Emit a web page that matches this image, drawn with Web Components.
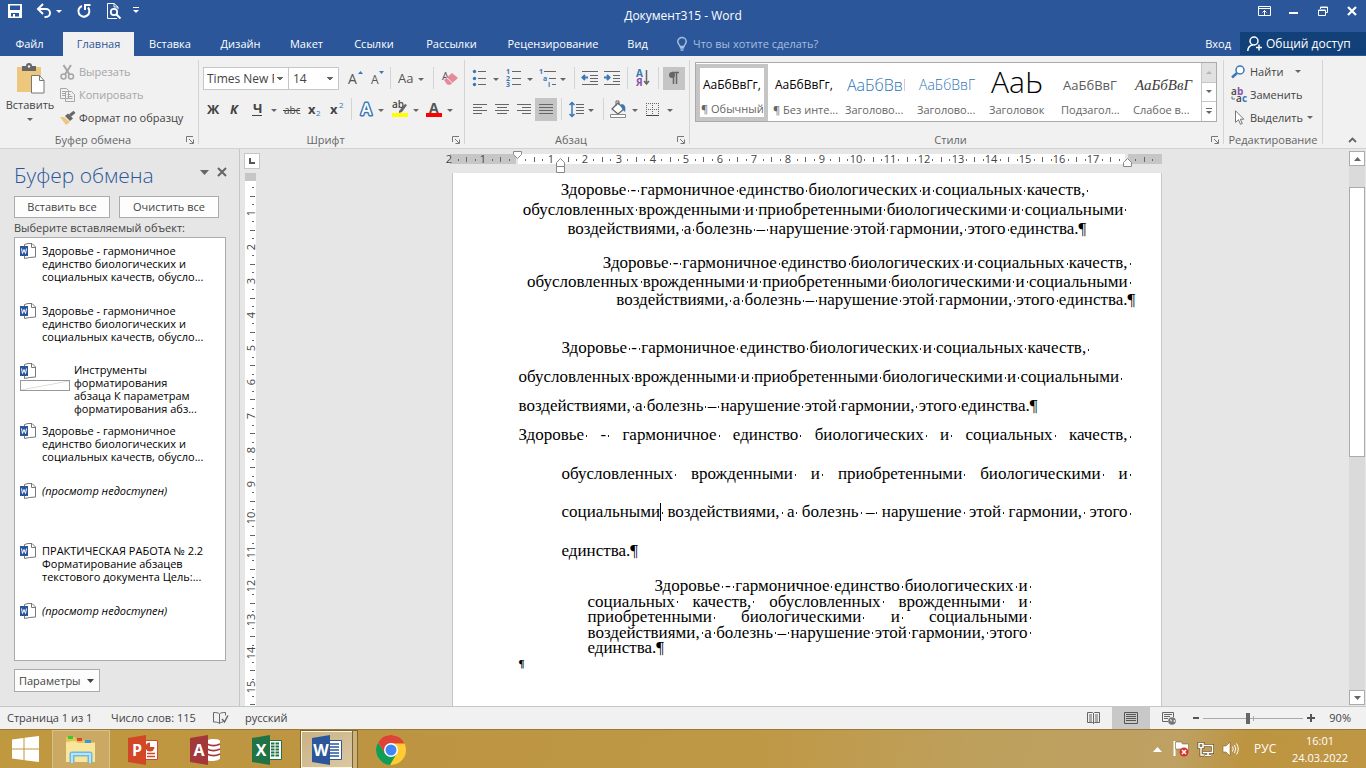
<!DOCTYPE html>
<html lang="ru">
<head>
<meta charset="utf-8">
<title>Документ315 - Word</title>
<style>
html,body{margin:0;height:100%}
body{font-family:"Open Sans","Noto Sans",sans-serif;font-size:11px;line-height:16px;color:#444;overflow:hidden}
</style>
</head>
<body>
<word-app></word-app>
<script>
const BASE = `*{box-sizing:border-box} button{font:inherit;color:inherit;background:none;border:0;padding:0;margin:0;white-space:nowrap}
svg{display:block;flex:none;overflow:visible} a{color:inherit;text-decoration:none}`;
function define(name, css, html) {
  const t = document.createElement('template');
  customElements.define(name, class extends HTMLElement {
    connectedCallback() {
      if (this.shadowRoot) return;
      t.innerHTML = `<style>${BASE}${css}</style>` + (typeof html === 'function' ? html(this) : html);
      this.attachShadow({mode: 'open'}).append(t.content.cloneNode(true));
    }
  });
}
const arrow = (x, y, c = '#666') => `<path fill="${c}" d="M${x - 3} ${y - 1}h6l-3 3z"/>`;
const svg = (w, h, inner) => `<svg width="${w}" height="${h}" viewBox="0 0 ${w} ${h}" aria-hidden="true">${inner}</svg>`;

/* ---------- ribbon building blocks ---------- */
define('rb-btn', `
:host{display:block;flex:none;width:var(--bw,22px);height:23px}
button{width:100%;height:100%;display:flex;align-items:center;justify-content:flex-start}
:host([on]) button{background:#c5c5c5}`, el => `<button type="button" aria-label="${el.getAttribute('label') || ''}"><slot></slot></button>`);
define('rb-sep', `:host{display:block;flex:none;width:1px;height:22px;background:#d4d4d4;margin:0 4px}`, '');
define('rb-group', `
:host{display:flex;flex-direction:column;flex:none;width:var(--w);padding-top:4px}
.in{flex:1;display:flex;flex-direction:column;border-right:1px solid #d4d4d4;margin-bottom:4px}
.body{flex:1;min-height:0}
.foot{display:flex;align-items:center;height:16px;color:#666;margin-bottom:-4px}
.foot span{flex:1;text-align:center;white-space:nowrap}
.foot button{width:12px;height:16px;display:flex;align-items:center}`,
el => `<div class="in"><div class="body"><slot></slot></div><div class="foot"><span>${el.getAttribute('name')}</span>${el.hasAttribute('launcher') ? `<button type="button" aria-label="Параметры группы">${svg(8, 8, '<path d="M.5 6V.5H7M3 3l4 4M7.500 3.500V7.500H3.500" fill="none" stroke="#777"/>')}</button>` : ''}</div></div>`);

define('style-card', `
:host{display:block;flex:none;width:72px;height:57px;padding:0 2px 0 5px}
button{width:100%;height:100%;display:flex;flex-direction:column;text-align:left;overflow:hidden}
:host([on]){padding:0}
:host([on]) button{border:4px solid #c5c5c5;padding:0 1px}
b{display:flex;align-items:center;font-weight:400;height:34px;width:60px;overflow:hidden;color:#000;font-size:12px;margin-top:4px;padding-left:2px;white-space:nowrap}
:host([on]) b{margin-top:0}
span{color:#666;display:block;width:100%;line-height:16px}
.h1{color:#2e74b5;font-size:16px;font-weight:300}.h2{color:#2e74b5;font-size:14px;font-weight:300}
.t{font-size:30px;font-weight:300;line-height:28px;align-items:flex-start}.s{color:#5a5a5a;font-size:13px}
.e{font:italic 15px "Liberation Serif",serif;color:#404040}`,
el => `<button type="button"><b class="${el.getAttribute('look') || ''}">${el.getAttribute('sample')}</b><span>${el.getAttribute('name')}</span></button>`);

/* ---------- title bar ---------- */
define('title-bar', `
:host{display:grid;grid-template-columns:1fr auto 1fr;align-items:center;height:32px;color:#fff}
.q,.c{display:flex;height:22px;align-self:start}.c{justify-content:flex-end}
.q button,.c button{height:22px;display:flex;align-items:center;justify-content:center}
.c button{width:29px}
.q button:nth-child(1){width:30px}.q button:nth-child(2){width:38px}.q button:nth-child(3){width:32px}.q button:nth-child(4){width:27px}.q button:nth-child(5){width:18px}
h1{font-size:12px;font-weight:400;margin:0;white-space:nowrap}`,
`<div class="q">
<button type="button" aria-label="Сохранить">${svg(14, 14, '<path fill="#fff" fill-rule="evenodd" d="M0 0h14v14H0zM2 1.500v4.500h10V1.500zM3 9v3.500h2V10h2v2.500h4V9z"/>')}</button>
<button type="button" aria-label="Отменить">${svg(24, 14, '<path d="M2 5h7a4 4 0 0 1 0 8H7.500" fill="none" stroke="#fff" stroke-width="2"/><path d="M6 0L1 5l5 5" fill="none" stroke="#fff" stroke-width="2"/>' + arrow(22, 7, '#fff'))}</button>
<button type="button" aria-label="Повторить">${svg(14, 14, '<path d="M5 2A5.500 5.500 0 1 0 11 3.500" fill="none" stroke="#fff" stroke-width="2"/><path d="M8 6V1h5.500" fill="none" stroke="#fff" stroke-width="2"/>')}</button>
<button type="button" aria-label="Просмотр">${svg(14, 16, '<path d="M10 15.500H.5V.5H7l4 3.500v2M7 .5V4h4" fill="none" stroke="#fff"/><circle cx="7" cy="9" r="3.200" fill="none" stroke="#fff" stroke-width="1.800"/><path d="M9.500 11.500l4 4" stroke="#fff" stroke-width="2"/>')}</button>
<button type="button" aria-label="Настройка панели">${svg(6, 8, '<path d="M0 .5h6" stroke="#fff"/>' + arrow(3, 4, '#fff'))}</button>
</div><h1>Документ315 - Word</h1>
<div class="c">
<button type="button" aria-label="Параметры ленты">${svg(13, 10, '<path d="M.5.5h12v9H.5zM1 2.500h11M6.500 9V4.500M4.500 6.500l2-2 2 2" fill="none" stroke="#fff"/>')}</button>
<button type="button" aria-label="Свернуть">${svg(9, 10, '<path d="M0 7h9" stroke="#fff" stroke-width="2"/>')}</button>
<button type="button" aria-label="Восстановить">${svg(10, 10, '<path d="M2.500 3V1h7v5.500H7.500M.5 4h7v5.500h-7zM.5 4.500h7M2.500 1.500h7" fill="none" stroke="#fff"/>')}</button>
<button type="button" aria-label="Закрыть">${svg(10, 10, '<path d="M1 1l8 8M9 1L1 9" stroke="#fff" stroke-width="2.200"/>')}</button></div>`);

define('tab-strip', `
:host{display:flex;height:24px;color:#fff}
nav{display:flex}
nav a{width:var(--w);display:flex;align-items:center;justify-content:center;white-space:nowrap}
nav a.on{background:#f1f1f1;color:#2b579a}
nav a:first-child{padding-right:4px}
.ask{display:flex;align-items:center;gap:6px;color:#a6bddd;white-space:nowrap;margin-left:15px}
.sp{flex:1}.login{align-self:center;margin-right:9px}
.share{background:#124078;width:126px;height:23px;display:flex;align-items:center;gap:4px;padding-left:7px;font-size:12px}`,
`<nav><a href="#" style="--w:63px">Файл</a><a href="#" class="on" style="--w:71px">Главная</a><a href="#" style="--w:72px">Вставка</a><a href="#" style="--w:69px">Дизайн</a><a href="#" style="--w:63px">Макет</a><a href="#" style="--w:72px">Ссылки</a><a href="#" style="--w:83px">Рассылки</a><a href="#" style="--w:120px">Рецензирование</a><a href="#" style="--w:49px">Вид</a></nav>
<button type="button" class="ask">${svg(10, 14, '<path d="M3 9.500C3 8 .8 7 .8 4.800a4.200 4.200 0 0 1 8.400 0C9.200 7 7 8 7 9.500zM3 11h4M3.500 13h3" fill="none" stroke="#a6bddd" stroke-width="1.500"/>')}Что вы хотите сделать?</button>
<div class="sp"></div><a href="#" class="login">Вход</a>
<button type="button" class="share">${svg(15, 15, '<circle cx="7" cy="5" r="4" fill="none" stroke="#fff" stroke-width="1.500"/><path d="M.8 15c0-3 2-5.500 5-6M12 8.500v6M9 11.500h6" fill="none" stroke="#fff" stroke-width="1.500"/>')}Общий доступ</button>`);

/* ---------- ribbon ---------- */
const lines = (arr, c = '#666') => arr.map(([a, b, y]) => `<path d="M${a} ${y}.5H${b}" stroke="${c}"/>`).join('');
const txt = (x, y, s, size, fill, extra = '') => `<text x="${x}" y="${y}" font-size="${size}" fill="${fill}" ${extra}>${s}</text>`;
define('word-ribbon', `
:host{display:flex;height:93px;background:#f1f1f1;border-bottom:1px solid #d2d2d2}
.row{display:flex;height:23px}
.clip{display:flex}
.paste{width:60px;height:70px;display:flex;flex-direction:column;align-items:center;padding-top:4px;gap:3px}
.paste svg:last-child{margin-top:2px}
.side{display:flex;flex-direction:column}
.side button{display:flex;align-items:center;gap:4px;height:23px}
.side .dis{color:#a6a6a6}
.font{padding:7px 0 0 4px}.para{padding:7px 0 0 3px}
.two{margin-top:8px}
select{appearance:none;font:inherit;font-size:12px;color:#444;height:23px;border:1px solid #c6c6c6;border-radius:0;padding:0 14px 0 3px;margin:0;
background:linear-gradient(to bottom left,#666 50%,transparent 51%) no-repeat right 8px center/3px 3px,linear-gradient(to bottom right,#666 50%,transparent 51%) no-repeat right 5px center/3px 3px,#fff}
.f1{width:86px}.f2{width:55px;margin-left:-1px;padding-left:4px;margin-right:3px}
.gal{display:flex;height:60px;margin:2px 0 0 5px;width:522px;border:1px solid #ababab;background:#fff;padding-top:1px}
.cards{display:flex;flex:1;overflow:hidden}
.nav{width:15px;display:flex;flex-direction:column;border-left:1px solid #c6c6c6;margin-top:-1px}
.nav button{flex:1;display:flex;align-items:center;justify-content:center;border-top:1px solid #c6c6c6}
.nav button:first-child{background:#e1e1e1;border-top:0}
.edit{display:flex;flex-direction:column;padding-left:7px}.edit button{display:flex;align-items:center;gap:4px;height:23px}
.edit .find svg:last-child{margin-left:8px}
.end{flex:1;display:flex;align-items:flex-end;justify-content:flex-end;padding:0 9px 5px 0}`,
`<rb-group name="Буфер обмена" launcher style="--w:199px"><div class="clip">
<button type="button" class="paste">${svg(30, 30, '<path fill="#edc77e" d="M2 3h24v25H2z"/><path fill="#666" d="M7 2h4a3 3 0 0 1 6 0h4v5H7z"/><circle cx="14" cy="2.500" r="1.200" fill="#f1f1f1"/><path fill="#fff" stroke="#777" d="M16.500 11.500h8l4.500 5v12.500h-12.500z"/><path fill="none" stroke="#777" d="M24.500 11.500v5h4.500"/>')}Вставить${svg(6, 4, arrow(3, 1))}</button>
<div class="side">
<button type="button" class="dis">${svg(15, 16, '<g fill="none" stroke="#a6a6a6" stroke-width="1.500"><circle cx="3.500" cy="12.500" r="2.500"/><circle cx="11" cy="12.500" r="2.500"/><path d="M5 10.500L11 1M9.500 10.500L3.500 1" stroke-width="2"/></g>')}Вырезать</button>
<button type="button" class="dis">${svg(15, 14, '<g fill="#f1f1f1" stroke="#a6a6a6"><path d="M.5.5h6l2 2v8h-8zM5.500 3.500h6l3 3v7h-9z"/><path d="M2 3.500h3M2 5.500h3M2 7.500h3M7.500 6.500h3M7.500 8.500h5M7.500 10.500h5"/></g>')}Копировать</button>
<button type="button">${svg(15, 14, '<path fill="#edc77e" d="M0 6l4 0 6 5-4 3z"/><path fill="#666" d="M5 5l3-2.500 5 5L10 10z"/><path d="M10 4.500L14.500.8" stroke="#666" stroke-width="3"/>')}Формат по образцу</button></div></div></rb-group>
<rb-group name="Шрифт" launcher style="--w:266px"><div class="font"><div class="row">
<select class="f1" aria-label="Шрифт"><option>Times New Roman</option></select><select class="f2" aria-label="Размер шрифта"><option>14</option></select>
<rb-btn label="Увеличить">${svg(22, 23, txt(6, 17, 'A', 14, '#555') + '<path fill="#3a78b5" d="M16 7h5l-2.500-3z"/>')}</rb-btn>
<rb-btn label="Уменьшить">${svg(22, 23, txt(7, 17, 'A', 12, '#555') + '<path fill="#3a78b5" d="M15 4h5l-2.500 3z"/>')}</rb-btn>
<rb-sep></rb-sep><rb-btn label="Регистр" style="--bw:34px">${svg(34, 23, txt(3, 16, 'Aa', 13, '#555') + arrow(26, 12))}</rb-btn>
<rb-sep></rb-sep><rb-btn label="Очистить" style="--bw:26px">${svg(26, 23, txt(4, 13, 'A', 11, '#555') + '<path fill="#e8899b" d="M6 13l8-7 6 5-8 7-3-.5z"/><path stroke="#f1f1f1" d="M8.500 10.500l6 5.500"/>')}</rb-btn></div>
<div class="row two">
<rb-btn label="Полужирный">${svg(22, 23, txt(4, 16, 'Ж', 13, '#444', 'font-weight="700"'))}</rb-btn>
<rb-btn label="Курсив">${svg(22, 23, txt(5, 16, 'К', 13, '#444', 'font-weight="700" font-style="italic"'))}</rb-btn>
<rb-btn label="Подчеркнутый" style="--bw:34px">${svg(34, 23, txt(6, 15, 'Ч', 13, '#444', 'font-weight="700"') + '<path d="M5 17.500h10" stroke="#444"/>' + arrow(27, 12))}</rb-btn>
<rb-btn label="Зачеркнутый">${svg(22, 23, txt(3, 16, 'abc', 10, '#444') + '<path d="M2 12.500h17" stroke="#444"/>')}</rb-btn>
<rb-btn label="Подстрочный">${svg(22, 23, txt(5, 16, 'x', 13, '#444', 'font-weight="700"') + txt(13, 18, '2', 8, '#3a78b5'))}</rb-btn>
<rb-btn label="Надстрочный">${svg(22, 23, txt(5, 16, 'x', 13, '#444', 'font-weight="700"') + txt(14, 10, '2', 8, '#3a78b5'))}</rb-btn>
<rb-sep></rb-sep>
<rb-btn label="Эффекты" style="--bw:32px">${svg(32, 23, txt(5, 17, 'A', 16, '#fff', 'stroke="#3a78b5" stroke-width="3" font-weight="600" paint-order="stroke" stroke-linejoin="round"') + arrow(25, 12))}</rb-btn>
<rb-btn label="Выделение" style="--bw:34px">${svg(34, 23, txt(4, 10, 'ab', 10, '#444', 'font-weight="600"') + '<path d="M11 13l6-7 2 1-5 7-3 1z" fill="#666"/><path fill="#ff0" d="M4 15h16v4H4z"/>' + arrow(28, 12))}</rb-btn>
<rb-btn label="Цвет текста" style="--bw:34px">${svg(34, 23, txt(7, 15, 'A', 14, '#555', 'font-weight="700"') + '<path fill="#f00" d="M4 15h16v4H4z"/>' + arrow(28, 12))}</rb-btn>
</div></div></rb-group>
<rb-group name="Абзац" launcher style="--w:225px"><div class="para"><div class="row">
<rb-btn label="Маркеры" style="--bw:34px">${svg(34, 23, '<g fill="#3a78b5"><circle cx="6.500" cy="4.500" r="1.700"/><circle cx="6.500" cy="11.500" r="1.700"/><circle cx="6.500" cy="17.500" r="1.700"/></g>' + lines([[10, 18, 4], [10, 18, 11], [10, 18, 17]]) + arrow(28, 12))}</rb-btn>
<rb-btn label="Нумерация" style="--bw:34px">${svg(34, 23, [[7, 1], [14, 2], [20, 3]].map(([y, n]) => txt(4, y, n, 7, '#3a78b5', 'font-weight="700"')).join('') + lines([[10, 19, 4], [10, 19, 11], [10, 19, 17]]) + arrow(28, 12))}</rb-btn>
<rb-btn label="Многоуровневый" style="--bw:34px">${svg(34, 23, txt(3, 7, '1', 7, '#3a78b5', 'font-weight="700"') + txt(7, 14, 'a', 7, '#3a78b5', 'font-weight="700"') + txt(12, 20, 'i', 7, '#3a78b5', 'font-weight="700"') + lines([[8, 20, 4], [13, 20, 11], [16, 20, 17]]) + arrow(27, 12))}</rb-btn>
<rb-sep></rb-sep>
<rb-btn label="Уменьшить отступ">${svg(22, 23, lines([[3, 19, 4], [11, 19, 8], [11, 19, 11], [11, 19, 14], [3, 19, 17]]) + '<path d="M9 10.500H4M6 8l-2.500 2.500L6 13" fill="none" stroke="#3a78b5" stroke-width="2"/>')}</rb-btn>
<rb-btn label="Увеличить отступ">${svg(22, 23, lines([[3, 19, 4], [12, 19, 8], [12, 19, 11], [12, 19, 14], [3, 19, 17]]) + '<path d="M3 10.500h5M6 8l2.500 2.500L6 13" fill="none" stroke="#3a78b5" stroke-width="2"/>')}</rb-btn>
<rb-sep></rb-sep>
<rb-btn label="Сортировка">${svg(22, 23, txt(4, 10, 'А', 10, '#3a78b5', 'font-weight="700"') + txt(4, 19, 'Я', 10, '#8a52a8', 'font-weight="700"') + '<path d="M14.500 3v13M12 14l2.500 3 2.500-3" fill="none" stroke="#666" stroke-width="1.500"/>')}</rb-btn>
<rb-sep></rb-sep>
<rb-btn on label="Непечатаемые знаки">${svg(22, 23, '<path d="M9 5.500h7M10.500 5v12M13.500 5v12" stroke="#666" stroke-width="1.500"/><circle cx="9" cy="8" r="3" fill="#666"/>')}</rb-btn></div>
<div class="row two">
<rb-btn label="По левому краю">${svg(22, 23, lines([[5, 19, 6], [5, 14, 9], [5, 19, 12], [5, 14, 15]]))}</rb-btn>
<rb-btn label="По центру">${svg(22, 23, lines([[5, 19, 6], [7, 17, 9], [5, 19, 12], [7, 17, 15]]))}</rb-btn>
<rb-btn label="По правому краю" style="--bw:23px">${svg(22, 23, lines([[5, 19, 6], [10, 19, 9], [5, 19, 12], [10, 19, 15]]))}</rb-btn>
<rb-btn on label="По ширине">${svg(22, 23, lines([[4, 18, 6], [4, 18, 9], [4, 18, 12], [4, 18, 15]]))}</rb-btn>
<rb-sep></rb-sep>
<rb-btn label="Интервал" style="--bw:33px">${svg(33, 23, lines([[10, 18, 6], [10, 18, 9], [10, 18, 12], [10, 18, 15]]) + '<path d="M6 4v15M3.500 7L6 4.500 8.500 7M3.500 16L6 18.500 8.500 16" fill="none" stroke="#3a78b5" stroke-width="1.500"/>' + arrow(25, 12))}</rb-btn>
<rb-sep></rb-sep>
<rb-btn label="Заливка" style="--bw:33px">${svg(33, 23, '<path d="M4 11l6-6 6 6-6 5z" fill="#fff" stroke="#666" stroke-width="1.300"/><path d="M8 8V3h3v4" fill="none" stroke="#666"/><path d="M13 6c4 0 5 3 4 8l-3-3z" fill="#3a78b5"/><path d="M2.500 16.500h15v3h-15z" fill="#fff" stroke="#888"/>' + arrow(27, 12))}</rb-btn>
<rb-btn label="Границы" style="--bw:32px">${svg(32, 23, '<path d="M5 5.500h13M5 11.500h13M5.500 5v12M11.500 5v12M17.500 5v12" stroke="#666" stroke-dasharray="1 1"/><path d="M5 17.500h13" stroke="#444"/>' + arrow(29, 12))}</rb-btn>
</div></div></rb-group>
<rb-group name="Стили" launcher style="--w:534px"><div class="gal"><div class="cards">
<style-card on sample="АаБбВвГг," name="¶ Обычный"></style-card>
<style-card sample="АаБбВвГг," name="¶ Без инте..."></style-card>
<style-card look="h1" sample="АаБбВвГ" name="Заголово..."></style-card>
<style-card look="h2" sample="АаБбВвГ" name="Заголово..."></style-card>
<style-card look="t" sample="АаЬ" name="Заголовок"></style-card>
<style-card look="s" sample="АаБбВвГ" name="Подзагол..."></style-card>
<style-card look="e" sample="АаБбВвГ" name="Слабое в..."></style-card></div>
<div class="nav"><button type="button" aria-label="Вверх">${svg(6, 4, '<path fill="#b5b5b5" d="M0 4h6L3 1z"/>')}</button><button type="button" aria-label="Вниз">${svg(6, 4, arrow(3, 1))}</button><button type="button" aria-label="Еще">${svg(6, 7, '<path d="M0 .5h6" stroke="#666"/>' + arrow(3, 4))}</button></div></div></rb-group>
<rb-group name="Редактирование" style="--w:99px"><div class="edit">
<button type="button" class="find">${svg(15, 14, '<circle cx="9" cy="5" r="4" fill="#fff" stroke="#3a78b5" stroke-width="1.500"/><path d="M6 8l-5 4.500" stroke="#3a78b5" stroke-width="2.500"/>')}Найти${svg(6, 4, arrow(3, 1))}</button>
<button type="button">${svg(15, 16, txt(0, 8, 'a', 10, '#444', 'font-weight="600"') + txt(6, 8, 'b', 10, '#8a52a8', 'font-weight="700"') + txt(5, 15, 'a', 10, '#444', 'font-weight="600"') + txt(11, 15, 'c', 10, '#3a78b5', 'font-weight="700"') + '<path d="M1 9.500v2.500h3" fill="none" stroke="#3a78b5"/>')}Заменить</button>
<button type="button">${svg(15, 15, '<path d="M4.500.8v11.500l3-2.500 2 4.500 1.800-.8-2-4.300h3.500z" fill="#fff" stroke="#777"/>')}Выделить${svg(6, 4, arrow(3, 1))}</button></div></rb-group>
<div class="end"><button type="button" aria-label="Свернуть ленту">${svg(9, 6, '<path d="M1 5l3.500-3.500L8 5" fill="none" stroke="#666" stroke-width="1.800"/>')}</button></div>`);

/* ---------- clipboard pane ---------- */
const docIcon = svg(16, 16, '<path d="M4.500 3V1.500L8 .5h4l3.500 3.500V14l-6 .5-5 1V13" fill="#fff" stroke="#777"/><path d="M11.500.5v4h4" fill="none" stroke="#777"/><path fill="#2b579a" d="M0 3h8v10H0z"/><path d="M1.500 5.500l1 5L4 6.500l1.500 4 1-5" fill="none" stroke="#fff"/>');
define('clip-item', `
:host{display:flex;height:60px;gap:6px;color:#000;line-height:13px;padding-left:5px}
p{margin:0;padding-top:1px;white-space:pre-line}
:host([dim]) p{font-style:italic}
.pic{width:50px}
.th{width:50px;height:11px;border:1px solid #999;background:linear-gradient(to bottom right,#fff 45%,#d5dfd0 50%,#fff 55%);margin-top:1px}
:host([thumb]){gap:4px}:host([thumb]) p{padding:0}`,
el => `<div class="${el.hasAttribute('thumb') ? 'pic' : ''}">${docIcon}${el.hasAttribute('thumb') ? '<div class="th"></div>' : ''}</div><p><slot></slot></p>`);
define('clip-pane', `
:host{display:flex;flex-direction:column;width:240px;flex:none;background:#e6e6e6;border-right:1px solid #c6c6c6;padding:13px 12px 0 14px}
header{display:flex;align-items:center;gap:8px;height:26px}
h2{flex:1;margin:0;font-size:21px;line-height:26px;color:#2b579a;font-weight:300}
header button{margin-bottom:6px}
.b{display:flex;gap:9px;margin-top:8px}
.b button,.opt{height:22px;background:#fdfdfd;border:1px solid #ababab}
.b button:first-child{width:96px}.b button:last-child{width:100px}
#l{margin:2px 0 1px}
.list{flex:1;background:#fff;border:1px solid #ababab;padding-top:5px;overflow:hidden;margin-right:1px}
.opt{width:86px;margin:8px 0 14px;height:23px;display:flex;align-items:center;gap:6px;padding-left:4px}
`,
`<header><h2>Буфер обмена</h2><button type="button" aria-label="Меню">${svg(9, 5, '<path fill="#666" d="M0 0h9L4.500 5z"/>')}</button><button type="button" aria-label="Закрыть">${svg(10, 10, '<path d="M1 1l8 8M9 1L1 9" stroke="#666" stroke-width="2"/>')}</button></header>
<div class="b"><button type="button">Вставить все</button><button type="button">Очистить все</button></div>
<div id="l">Выберите вставляемый объект:</div>
<div class="list" role="list" aria-labelledby="l">
<clip-item>Здоровье - гармоничное
единство биологических и
социальных качеств, обусло...</clip-item>
<clip-item>Здоровье - гармоничное
единство биологических и
социальных качеств, обусло...</clip-item>
<clip-item thumb>Инструменты
форматирования
абзаца К параметрам
форматирования абз...</clip-item>
<clip-item>Здоровье - гармоничное
единство биологических и
социальных качеств, обусло...</clip-item>
<clip-item dim>(просмотр недоступен)</clip-item>
<clip-item>ПРАКТИЧЕСКАЯ РАБОТА № 2.2
Форматирование абзацев
текстового документа Цель:...</clip-item>
<clip-item dim>(просмотр недоступен)</clip-item></div>
<button type="button" class="opt">Параметры${svg(7, 4, '<path fill="#444" d="M0 0h7L3.500 4z"/>')}</button>`);

/* ---------- rulers ---------- */
const CM = 610 / 18;
define('h-ruler', `:host{display:block;width:710px;height:24px}text{font-size:11px;fill:#444;text-anchor:middle}`, () => {
  let s = '<path fill="#c6c6c6" d="M-2 5h66v10H-2z"/><path fill="#fff" d="M66 5h607v10H66z"/><path fill="#c6c6c6" d="M676 5h34v10h-34z"/>';
  for (let i = -2; i < 19; i++) {
    const x = f => 65 + Math.round((i + f) * CM);
    if (i && i < 18) s += `<text x="${x(0)}" y="14">${Math.abs(i)}</text>`;
    s += `<path d="M${x(.5)}.5 8v5" stroke="#666"/><path d="M${x(.25)} 10h1v2h-1zM${x(.75)} 10h1v2h-1z" fill="#666"/>`;
  }
  s += '<g fill="#fff" stroke="#888"><path d="M61.500 2.500h8v3l-4 4-4-4zM104.500 23.500v-6h8v6zM104.500 17.500v-4l4-4 4 4v4zM671.500 17.500v-4l4-4 4 4v4z"/></g>';
  return svg(710, 24, s);
});
define('v-ruler', `:host{display:block;overflow:hidden;min-height:0}text{font-size:11px;fill:#444;text-anchor:middle}svg{width:24px;height:100%}`, () => {
  let s = '<rect x="5" y="0" width="11" height="2000" fill="#fff"/><path fill="#c6c6c6" d="M5 0h11v8H5z"/>';
  for (let i = 0; i < 24; i++) {
    const y = f => 6 + Math.round((i + f) * CM);
    if (i) s += `<text transform="translate(15 ${y(0)}) rotate(-90)">${i}</text>`;
    s += `<path d="M10 ${y(.5)}.5h5" stroke="#666"/><path d="M12 ${y(.25)}h2v1h-2zM12 ${y(.75)}h2v1h-2z" fill="#666"/>`;
  }
  return `<svg aria-hidden="true">${s}</svg>`;
});

/* ---------- document ---------- */
define('doc-para', `
:host{display:flex;flex-direction:column;justify-content:space-between;height:var(--h);line-height:var(--lh);margin-top:var(--mt,0);font-family:"Liberation Serif",serif;font-size:17px;color:#000}
div{white-space:nowrap}
.s{white-space:pre;background:linear-gradient(#222,#222) no-repeat 2px 58%/1px 2px}
.h{display:inline-block;width:0;white-space:pre}
.h .s{display:inline-block;width:5px}
.caret{display:inline-block;width:1px;height:18px;margin-right:-1px;background:#000;vertical-align:-4px}
:host([kind=center]) div{text-align:center}
:host([kind=right]) div{text-align:right}
:host([kind=first]) div:first-of-type{padding-left:43px}
:host([kind=hang]) div,:host([kind=block]) div{text-align:justify;text-align-last:justify}
:host([kind=hang]) div:not(:first-of-type){padding-left:43px}
:host([kind=block]){padding:0 100px 0 69px}
:host([kind=block]) div:first-of-type{padding-left:67px}
:host([kind=hang]) div:last-child,:host([kind=block]) div:last-child{text-align-last:left}
:host([kind=mark]){font-size:11px;font-weight:700}`,
el => {
  const ls = el.getAttribute('lines').split('|');
  return ls.map((l, i) => '<div>' + l.split(' ').join('<span class="s"> </span>').replace('^', '<span class="caret"></span>') +
    `<span class="h">${i < ls.length - 1 ? '<span class="s"> </span>' : '¶'}</span></div>`).join('');
});
define('doc-page', `
:host{display:block;width:710px;flex:none;background:#fff;border-left:1px solid #c6c6c6;border-right:1px solid #c6c6c6;padding:7px 33px 0 66px}`, `
<doc-para kind="center" style="--lh:19px;--h:58px" lines="Здоровье - гармоничное единство биологических и социальных качеств,|обусловленных врожденными и приобретенными биологическими и социальными|воздействиями, а болезнь – нарушение этой гармонии, этого единства."></doc-para>
<doc-para kind="right" style="--lh:18px;--h:55px;--mt:16px" lines="Здоровье - гармоничное единство биологических и социальных качеств,|обусловленных врожденными и приобретенными биологическими и социальными|воздействиями, а болезнь – нарушение этой гармонии, этого единства."></doc-para>
<doc-para kind="first" style="--lh:29px;--h:87px;--mt:24px" lines="Здоровье - гармоничное единство биологических и социальных качеств,|обусловленных врожденными и приобретенными биологическими и социальными|воздействиями, а болезнь – нарушение этой гармонии, этого единства."></doc-para>
<doc-para kind="hang" style="--lh:29px;--h:145px" lines="Здоровье - гармоничное единство биологических и социальных качеств,|обусловленных врожденными и приобретенными биологическими и|социальными^ воздействиями, а болезнь – нарушение этой гармонии, этого|единства."></doc-para>
<doc-para kind="block" style="--lh:15px;--h:77px;--mt:13px" lines="Здоровье - гармоничное единство биологических и|социальных качеств, обусловленных врожденными и|приобретенными биологическими и социальными|воздействиями, а болезнь – нарушение этой гармонии, этого|единства."></doc-para>
<doc-para kind="mark" style="--lh:16px;--h:16px" lines=""></doc-para>`);
define('scroll-bar', `
:host{display:flex;flex-direction:column;width:16px;background:#dadada;margin:2px 1px 1px 0}
button{height:15px;background:#fff;border:1px solid #ababab;display:flex;align-items:center;justify-content:center;flex:none}
.gap{flex:21}.thumb{flex:269;background:#fff;border:1px solid #ababab}.rest{flex:234}`,
`<button type="button" aria-label="Вверх">${svg(7, 4, '<path fill="#666" d="M0 4h7L3.500 0z"/>')}</button><div class="gap"></div><div class="thumb"></div><div class="rest"></div><button type="button" aria-label="Вниз">${svg(7, 4, '<path fill="#666" d="M0 0h7L3.500 4z"/>')}</button>`);
define('doc-area', `
:host{flex:1;min-width:0;display:flex;background:#e6e6e6;overflow:hidden}
.g{flex:1;display:grid;grid-template:24px minmax(0,1fr)/24px minmax(0,1fr)}
.tab{width:16px;height:16px;background:#fff;border:1px solid #c6c6c6;margin:4px 0 0 4px;display:flex;align-items:center;justify-content:center}
.c{display:flex;justify-content:center;min-height:0}`,
`<div class="g"><button type="button" class="tab" aria-label="Табуляция">${svg(6, 6, '<path d="M1 0v5h5" fill="none" stroke="#555" stroke-width="2"/>')}</button><div class="c"><h-ruler></h-ruler></div><v-ruler></v-ruler><div class="c"><doc-page></doc-page></div></div><scroll-bar></scroll-bar>`);

/* ---------- status bar ---------- */
define('status-bar', `
:host{display:flex;height:23px;align-items:center;background:#f1f1f1;border-top:1px solid #c6c6c6;padding:0 15px 0 7px;flex:none;white-space:nowrap}
.p{width:104px}.w{width:102px}.l{margin-left:17px}.sp{flex:1}
.v{width:38px;height:22px;display:flex;align-items:center;justify-content:center}.v.on{background:#c8c8c8}
.z{display:flex;align-items:center;margin-left:5px;gap:4px}
input{appearance:none;width:100px;height:12px;margin:0;background:linear-gradient(#aaa,#aaa) no-repeat 0 50%/100% 1px,linear-gradient(#aaa,#aaa) no-repeat 50% 50%/1px 5px}
input::-webkit-slider-thumb{appearance:none;width:4px;height:11px;background:#666}
.pc{width:36px;text-align:right}`,
`<span class="p">Страница 1 из 1</span><span class="w">Число слов: 115</span><button type="button" aria-label="Правописание">${svg(15, 13, '<path d="M6.500 11.500V2C5 .5 3 .5 .5 .5v9.500c2 0 4.500 0 6 1.500 1-1 2-1.500 3.500-1.500M6.500 2C8 .5 10 .5 12.500 .5v3" fill="none" stroke="#666"/><path d="M9 7l2.500 3L15 3.500" fill="none" stroke="#666" stroke-width="1.500"/>')}</button><span class="l">русский</span>
<div class="sp"></div>
<button type="button" class="v" aria-label="Режим чтения">${svg(13, 12, '<path d="M.5.5h5l1 1 1-1h5v10h-5l-1 1-1-1h-5zM6.500 1v11" fill="none" stroke="#666"/><path d="M2 3h3M2 5h3M2 7h3M2 9h3M8 3h3M8 5h3M8 7h3M8 9h3" stroke="#666"/>')}</button>
<button type="button" class="v on" aria-label="Разметка">${svg(14, 12, '<path d="M.5.5h13v11H.5z" fill="none" stroke="#555"/><path d="M2 2.500h10M2 4.500h10M2 6.500h10M2 8.500h10" stroke="#555"/>')}</button>
<button type="button" class="v" aria-label="Веб-документ">${svg(14, 13, '<path d="M6 9.500H.5V.5h11V5M2 2.500h8M2 4.500h6M2 6.500h4" fill="none" stroke="#666"/><circle cx="10" cy="9" r="3.800" fill="#777"/><path d="M8 7l2 1-1 2zM11 9l2-1v2z" fill="#fff"/>')}</button>
<div class="z"><button type="button" aria-label="Мельче">${svg(6, 10, '<path d="M0 5h6" stroke="#555" stroke-width="2"/>')}</button><input type="range" min="0" max="100" value="45" aria-label="Масштаб"><button type="button" aria-label="Крупнее">${svg(8, 8, '<path d="M0 4h8M4 0v8" stroke="#555" stroke-width="2"/>')}</button></div><span class="pc">90%</span>`);

/* ---------- task bar ---------- */
const office = (c, l, art) => svg(30, 30, `<path fill="#fff" stroke="${c}" d="M16 5.500h13.500v19H16z"/>${art}<path fill="${c}" d="M0 3l18-3v30L0 27z"/>` + txt(9, 21, l, 16, '#fff', 'font-weight="700" text-anchor="middle"'));
define('task-app', `
:host{display:block;width:62px;height:39px;padding:0 2px}
button{width:58px;height:39px;display:flex;align-items:center;justify-content:center;border:1px solid transparent}
:host([state=open]) button{background:#cba963;border-color:#d8c08a}
:host([state=active]) button{background:linear-gradient(to bottom right,#c9b084,#dccaa5);border-color:#fff6e0;box-shadow:inset -4px 0 #cbb27c,inset -5px 0 #7d6330,inset 0 0 0 1px #fff6e0;outline:1px solid #7d6330;outline-offset:-1px;padding-right:4px}`,
el => `<button type="button" aria-label="${el.getAttribute('label')}"><slot></slot></button>`);
define('task-bar', `
:host{display:flex;height:39px;flex:none;color:#fff;background:linear-gradient(100deg,#c0983f 0,#bd9542 28%,#bf9845 55%,#bea05d 72%,#bea163 86%,#bd9440 91%,#bf9744 100%);border-top:1px solid #9a7a38;overflow:hidden}
.start{width:50px;display:flex;align-items:center;justify-content:center}
.sp{flex:1}.tray{display:flex;align-items:center}
.tray button{display:flex;align-items:center;width:25px}
.tray button:first-child{width:20px}
.tray .ru{width:24px;margin-left:6px;font-size:12px}
.tray .cl{width:72px;display:block;text-align:center;line-height:17px;margin:0 10px 0 6px}`,
`<button type="button" class="start" aria-label="Пуск">${svg(27, 26, '<path fill="#fff" d="M0 3.500L11.500 2v10.500H0zM12.500 1.800L27 0v12.500H12.500zM0 13.500h11.500V24L0 22.500zM12.500 13.500H27V26l-14.500-1.800z"/>')}</button>
<task-app state="open" label="Проводник">${svg(32, 30, '<path fill="#e5c25a" d="M1 2h9l2 3h7l2 2h9v20H1z"/><path fill="#3c3" d="M3 1h5v3H3z"/><path fill="#d43" d="M12 3h5v3h-5z"/><path fill="#39d" d="M20 5h6v3h-6z"/><path fill="#f8e69a" d="M1 7l9-1 3 2h17v19H1z"/><path d="M7 28v-9h18v9" fill="none" stroke="#6db9e0" stroke-width="5" stroke-linejoin="round"/><path d="M7 28v-9h18v9" fill="none" stroke="#b9e4f7" stroke-width="2"/>')}</task-app>
<task-app label="PowerPoint">${office('#d24726', 'P', '<circle cx="22" cy="12" r="4.500" fill="#d24726"/><path fill="#fff" d="M22 12V7a5 5 0 0 1 5 5z"/><path d="M19 18.500h8M19 21.500h8" stroke="#d24726" stroke-width="1.500"/>')}</task-app>
<task-app label="Access">${office('#a4373a', 'A', '<path fill="#bd9542" d="M16 4h15v22H16z"/><path fill="#fff" d="M16 6c4-3 14-2 14 0v17c0 3-10 4-14 2z"/><path d="M17 9c4 2 9 2 13 0M17 14c4 2 9 2 13 0M17 19c4 2 9 2 13 0" fill="none" stroke="#a4373a" stroke-width="1.500"/>')}</task-app>
<task-app label="Excel">${office('#217346', 'X', '<path d="M19 8.500h8M19 11.500h8M19 14.500h8M19 17.500h8M19 20.500h8" stroke="#217346" stroke-width="2"/><path d="M23 6v18" stroke="#fff"/>')}</task-app>
<task-app state="active" label="Word">${office('#2b579a', 'W', '<path d="M18 9h9M18 12h9M18 15h9M18 18h9M18 21h9" stroke="#2b579a" stroke-width="1.500"/>')}</task-app>
<task-app label="Chrome">${svg(30, 30, '<circle cx="15" cy="15" r="15" fill="#fc3"/><path fill="#db4437" d="M15 15L2 7.500A15 15 0 0 1 28.500 8.500H15z"/><path fill="#0f9d58" d="M2 7.500A15 15 0 0 0 14 30l7-12-12 0z"/><path fill="#db4437" d="M2 7.500l7 11 3-10z"/><circle cx="15" cy="15" r="7" fill="#fff"/><circle cx="15" cy="15" r="5.500" fill="#4285f4"/>')}</task-app>
<div class="sp"></div><div class="tray">
<button type="button" aria-label="Скрытые значки">${svg(9, 5, '<path fill="#fff" d="M0 5h9L4.500 0z"/>')}</button>
<button type="button" aria-label="Центр поддержки">${svg(17, 16, '<path d="M1.500 0v15" stroke="#fff" stroke-width="2"/><path fill="#fff" stroke="#6b5326" stroke-width=".5" d="M2.500 1h6l1 2h6v7H9L8 8H2.500z"/><circle cx="11" cy="11" r="4.500" fill="#d9342b"/><path d="M9 9l4 4M13 9l-4 4" stroke="#fff" stroke-width="1.500"/>')}</button>
<button type="button" aria-label="Сеть">${svg(16, 15, '<path d="M5 3.500h9.500v7H5M7 13.500h6M10 11v2M1 1.500h4v4H1zM3 6v7h3" fill="none" stroke="#6b5326" stroke-width="3"/><path d="M5 3.500h9.500v7H5M7 13.500h6M10 11v2M1 1.500h4v4H1zM3 6v7h3" fill="none" stroke="#fff" stroke-width="1.500"/>')}</button>
<button type="button" aria-label="Громкость">${svg(16, 14, '<path fill="#fff" stroke="#6b5326" stroke-width=".5" d="M0 4h3l4-4v14l-4-4H0z"/><path d="M9.500 4.500q1.500 2.500 0 5M11.500 3q2.500 4 0 8M13.500 1.500q3.500 5.500 0 11" fill="none" stroke="#fff"/>')}</button>
<button type="button" class="ru">РУС</button>
<button type="button" class="cl">16:01<br>24.03.2022</button></div>`);

define('word-app', `
:host{display:flex;flex-direction:column;height:100vh}
.top{background:#2b579a;flex:none}.mid{flex:1;display:flex;min-height:0}`,
`<div class="top"><title-bar></title-bar><tab-strip></tab-strip></div><word-ribbon></word-ribbon><div class="mid"><clip-pane></clip-pane><doc-area></doc-area></div><status-bar></status-bar><task-bar></task-bar>`);
</script>
</body>
</html>
